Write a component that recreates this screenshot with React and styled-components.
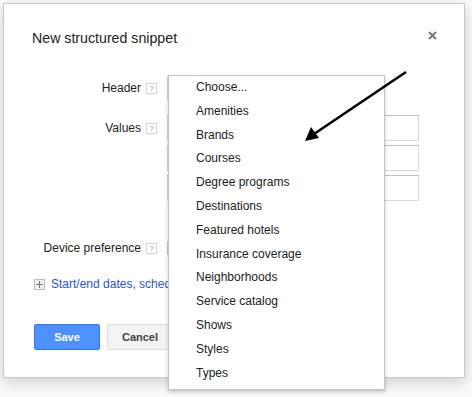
import React from "react";
import styled, { createGlobalStyle } from "styled-components";

const options = [
  "Choose...",
  "Amenities",
  "Brands",
  "Courses",
  "Degree programs",
  "Destinations",
  "Featured hotels",
  "Insurance coverage",
  "Neighborhoods",
  "Service catalog",
  "Shows",
  "Styles",
  "Types",
];

function App() {
  return (
    <>
      <GlobalStyle />
      <Page>
        <Dialog>
          <TitleRow>
            <Title>New structured snippet</Title>
            <Close>
              <svg width="9" height="9" viewBox="0 0 9 9">
                <path d="M1 1L8 8M8 1L1 8" stroke="#777" strokeWidth="2" />
              </svg>
            </Close>
          </TitleRow>

          <Field $top={28}>
            <Label $h={24}>Header</Label>
            <Help $h={24}>
              <HelpBox>?</HelpBox>
            </Help>
            <Controls>
              <Select />
            </Controls>
          </Field>

          <Field $top={15}>
            <Label $h={26}>Values</Label>
            <Help $h={26}>
              <HelpBox>?</HelpBox>
            </Help>
            <Controls>
              <Input />
              <Input />
              <Input />
            </Controls>
          </Field>

          <Field $top={35}>
            <Label $h={24}>Device preference</Label>
            <Help $h={24}>
              <HelpBox>?</HelpBox>
            </Help>
            <Controls>
              <DeviceBox />
            </Controls>
          </Field>

          <MoreRow>
            <PlusBox>
              <svg width="7" height="7" viewBox="0 0 7 7">
                <path d="M0 3.5H7M3.5 0V7" stroke="#777" strokeWidth="1" />
              </svg>
            </PlusBox>
            <MoreLink>Start/end dates, schedule</MoreLink>
          </MoreRow>

          <Buttons>
            <SaveButton>Save</SaveButton>
            <CancelButton>Cancel</CancelButton>
          </Buttons>

          <Menu>
            {options.map((o) => (
              <MenuItem key={o}>{o}</MenuItem>
            ))}
          </Menu>
        </Dialog>

        {/* annotation arrow drawn over the screenshot */}
        <Arrow width="472" height="397" viewBox="0 0 472 397">
          <line x1="406" y1="72" x2="314" y2="134" stroke="#000" strokeWidth="2.6" />
          <polygon points="305,141 311,127 319,138" fill="#000" />
        </Arrow>
      </Page>
    </>
  );
}

export default App;

const GlobalStyle = createGlobalStyle`
  html, body {
    margin: 0;
    padding: 0;
    background: #fafafa;
    font-family: "Liberation Sans", Arial, sans-serif;
  }
`;

const Page = styled.div`
  position: relative;
  width: 472px;
  height: 397px;
  padding: 3px 0 0 3px;
  box-sizing: border-box;
  overflow: hidden;
`;

const Dialog = styled.div`
  position: relative;
  width: 462px;
  height: 375px;
  box-sizing: border-box;
  padding: 24px 27px 0 28px;
  background: #fff;
  border: 1px solid #c8c8c8;
  box-shadow: 0 4px 14px rgba(0, 0, 0, 0.18);
`;

const TitleRow = styled.div`
  display: flex;
  justify-content: space-between;
  align-items: flex-start;
  height: 20px;
`;

const Title = styled.div`
  font-size: 14.2px;
  line-height: 20px;
  color: #222;
`;

const Close = styled.div`
  width: 9px;
  height: 9px;
  margin-top: 3px;
  display: flex;
`;

const Field = styled.div`
  display: flex;
  align-items: flex-start;
  margin-top: ${(p) => p.$top}px;
`;

const Label = styled.div`
  width: 109px;
  text-align: right;
  font-size: 12px;
  line-height: ${(p) => p.$h}px;
  color: #222;
`;

const Help = styled.div`
  height: ${(p) => p.$h}px;
  margin: 0 10px 0 5px;
  display: flex;
  align-items: center;
`;

const HelpBox = styled.div`
  width: 9px;
  height: 9px;
  border: 1px solid #d4d4d4;
  font-size: 8px;
  line-height: 9px;
  text-align: center;
  color: #999;
`;

const Controls = styled.div`
  display: flex;
  flex-direction: column;
  gap: 4px;
`;

const Select = styled.div`
  width: 200px;
  height: 24px;
  box-sizing: border-box;
  border: 1px solid #d9d9d9;
`;

const Input = styled.div`
  width: 252px;
  height: 26px;
  box-sizing: border-box;
  border: 1px solid #d9d9d9;
  border-top-color: #c0c0c0;
`;

const DeviceBox = styled.div`
  width: 80px;
  height: 13px;
  margin-top: 6px;
  box-sizing: border-box;
  border: 1px solid #c8c8c8;
`;

const MoreRow = styled.div`
  display: flex;
  align-items: center;
  height: 20px;
  margin: 14px 0 0 2px;
`;

const PlusBox = styled.div`
  width: 9px;
  height: 9px;
  border: 1px solid #bbb;
  background: #f2f2f2;
  display: flex;
  align-items: center;
  justify-content: center;
  margin-right: 6px;
`;

const MoreLink = styled.span`
  font-size: 12px;
  color: #2a56c6;
  white-space: nowrap;
`;

const Buttons = styled.div`
  display: flex;
  gap: 7px;
  margin: 30px 0 0 2px;
`;

const SaveButton = styled.button`
  width: 66px;
  height: 26px;
  border-radius: 2px;
  border: 1px solid #3079ed;
  background: #4d90fe;
  color: #fff;
  font-family: "Liberation Sans", Arial, sans-serif;
  font-size: 11px;
  font-weight: 700;
  padding: 0;
`;

const CancelButton = styled.button`
  width: 66px;
  height: 26px;
  border-radius: 2px;
  border: 1px solid #dcdcdc;
  background: #f3f3f3;
  color: #444;
  font-family: "Liberation Sans", Arial, sans-serif;
  font-size: 11px;
  font-weight: 700;
  padding: 0;
`;

const Menu = styled.div`
  position: absolute;
  left: 164px;
  top: 71px;
  width: 215px;
  padding: 0 0 4px;
  background: #fff;
  border: 1px solid #c4c4c4;
  box-shadow: 0 2px 4px rgba(0, 0, 0, 0.2);
`;

const MenuItem = styled.div`
  padding-left: 27px;
  font-size: 12px;
  line-height: 23.8px;
  height: 23.8px;
  color: #222;
  white-space: nowrap;
`;

const Arrow = styled.svg`
  position: absolute;
  left: 0;
  top: 0;
  pointer-events: none;
`;
